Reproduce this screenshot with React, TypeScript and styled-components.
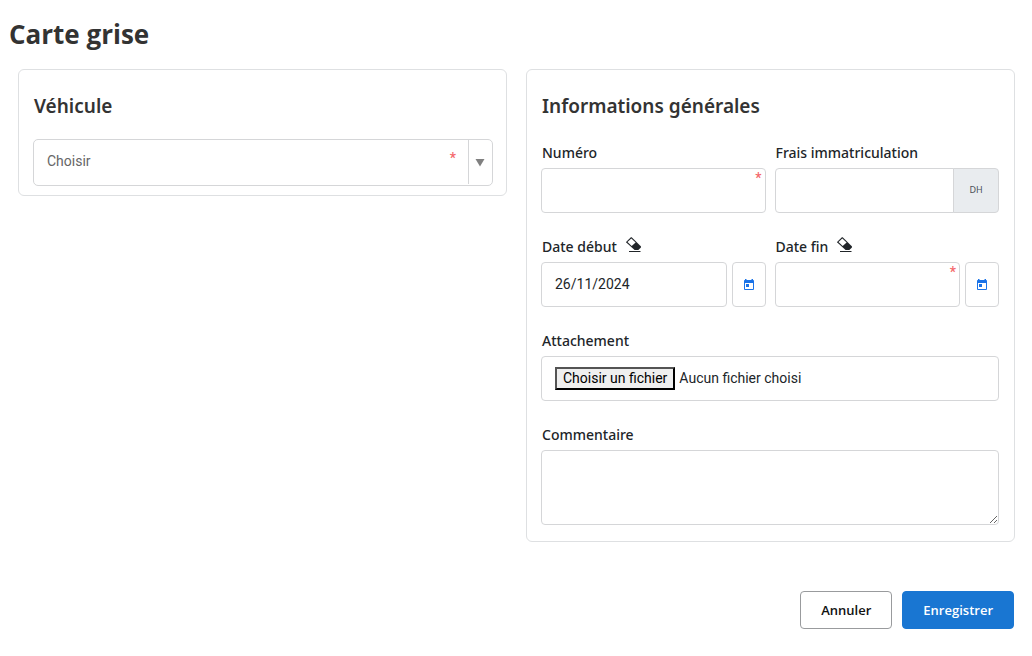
import React from "react";
import styled, { createGlobalStyle } from "styled-components";

const GlobalStyle = createGlobalStyle`
  *, *::before, *::after { box-sizing: border-box; }
  body {
    margin: 0;
    background: #fff;
    color: #212529;
    font-family: "Noto Sans", "Open Sans", sans-serif;
    font-size: 14px;
  }
`;

const Page = styled.main`
  padding: 14px 17px 27px 18px;
`;

const PageTitle = styled.h1`
  margin: 0 0 15px -9px;
  font-family: "Open Sans", sans-serif;
  font-size: 26px;
  font-weight: 700;
  line-height: 40px;
  color: #333;
`;

const Columns = styled.div`
  display: grid;
  grid-template-columns: 1fr 1fr;
  gap: 19px;
  align-items: start;
`;

const Card = styled.section<{ $compact?: boolean }>`
  min-width: 0;
  padding: ${(p) => (p.$compact ? "20px 13px 9px 14px" : "20px 15px 16px 14px")};
  border: 1px solid #dee0e2;
  border-radius: 6px;
`;

const CardTitle = styled.h2`
  margin: 0 0 17px 1px;
  font-family: "Noto Sans", sans-serif;
  font-size: 19px;
  font-weight: 600;
  line-height: 32px;
  color: #333;
`;

const Grid = styled.div`
  display: grid;
  grid-template-columns: 1fr 1fr;
  gap: 24px 9px;
  margin-top: 21px;
`;

const Field = styled.div<{ $wide?: boolean }>`
  min-width: 0;
  grid-column: ${(p) => (p.$wide ? "1 / -1" : "auto")};
`;

const LabelRow = styled.div`
  display: flex;
  align-items: flex-start;
  gap: 9px;
  height: 20px;
  margin-bottom: 5px;
  padding-left: 1px;
`;

const Label = styled.label`
  font-size: 14px;
  font-weight: 500;
  line-height: 20px;
`;

const ControlRow = styled.div`
  display: flex;
  gap: 5px;
`;

const Control = styled.div`
  position: relative;
  display: flex;
  flex: 1;
  min-width: 0;
`;

const TextInput = styled.input<{ $joined?: boolean }>`
  flex: 1;
  min-width: 0;
  width: 100%;
  height: 45px;
  padding: 0 13px 1px;
  border: 1px solid #d5d6d8;
  border-radius: ${(p) => (p.$joined ? "4px 0 0 4px" : "4px")};
  background: #fff;
  color: #212529;
  font-family: Roboto, sans-serif;
  font-size: 14px;
`;

const Unit = styled.span`
  display: flex;
  align-items: center;
  justify-content: center;
  width: 46px;
  margin-left: -1px;
  padding-bottom: 2px;
  border: 1px solid #d5d6d8;
  border-radius: 0 4px 4px 0;
  background: #e9ecef;
  color: #495057;
  font-size: 9px;
`;

const Required = styled.span<{ $inset?: boolean }>`
  position: absolute;
  top: ${(p) => (p.$inset ? 9 : 0)}px;
  right: ${(p) => (p.$inset ? 37 : 4)}px;
  color: #f4676b;
  font-family: Roboto, sans-serif;
  font-size: 14px;
  font-weight: 500;
  line-height: 20px;
  pointer-events: none;
`;

const Select = styled.select`
  appearance: none;
  width: 100%;
  height: 47px;
  padding: 0 60px 3px 13px;
  border: 1px solid #d5d6d8;
  border-radius: 5px;
  background: #fff;
  color: #666;
  font-family: Roboto, sans-serif;
  font-size: 14px;
`;

const SelectArrow = styled.span`
  position: absolute;
  top: 1px;
  bottom: 2px;
  right: 1px;
  display: flex;
  align-items: center;
  justify-content: center;
  width: 24px;
  padding-right: 2px;
  border-left: 1px solid #d5d6d8;
  pointer-events: none;
`;

const IconButton = styled.button`
  display: flex;
  padding: 0;
  border: 0;
  background: none;
  color: #212529;
  cursor: pointer;
`;

const CalendarButton = styled.button`
  display: flex;
  align-items: center;
  justify-content: center;
  width: 34px;
  height: 45px;
  padding: 0;
  border: 1px solid #d5d6d8;
  border-radius: 4px;
  background: #fff;
  color: #1a73e8;
  cursor: pointer;
`;

const FileBox = styled.div`
  position: relative;
  display: flex;
  align-items: center;
  gap: 4px;
  height: 45px;
  padding: 0 13px 1px;
  border: 1px solid #d5d6d8;
  border-radius: 4px;
  font-family: Roboto, sans-serif;
  font-size: 14px;
`;

const FileInput = styled.input`
  position: absolute;
  inset: 0;
  width: 100%;
  height: 100%;
  opacity: 0;
  cursor: pointer;
`;

const FileTrigger = styled.span`
  padding: 1px 6px;
  border: 2px outset #000;
  background: #efefef;
  color: #000;
  line-height: 17px;
`;

const TextArea = styled.textarea`
  display: block;
  width: 100%;
  height: 75px;
  padding: 10px 13px;
  border: 1px solid #d5d6d8;
  border-radius: 4px;
  background: #fff;
  font-family: Roboto, sans-serif;
  font-size: 14px;
  resize: vertical;
`;

const Actions = styled.footer`
  display: flex;
  justify-content: flex-end;
  gap: 10px;
  margin-top: 49px;
  padding-right: 1px;
`;

const Button = styled.button<{ $primary?: boolean }>`
  height: 38px;
  padding: 0 20px;
  border: 1px solid ${(p) => (p.$primary ? "#1976d2" : "#999b9d")};
  border-radius: 4px;
  background: ${(p) => (p.$primary ? "#1976d2" : "#fff")};
  color: ${(p) => (p.$primary ? "#fff" : "#111")};
  font-family: "Open Sans", sans-serif;
  font-size: 13px;
  font-weight: 600;
  cursor: pointer;
`;

const Eraser = () => (
  <svg width="16" height="16" viewBox="0 0 16 16" aria-hidden="true">
    <path
      d="M.3 4.800 4.900 .3Q5.300 0 5.700 .3L14.800 9.200Q15.400 10 14.700 10.700L12.300 13H8.600L.3 5.400Q0 5.100 .3 4.800Z"
      fill="currentColor"
    />
    <path d="M1.500 5.100 5.300 1.400 9.600 5.600 5.700 9Z" fill="#fff" />
    <path d="M3 14.500H14.500" stroke="currentColor" />
  </svg>
);

const Calendar = () => (
  <svg width="12" height="12" viewBox="0 0 12 12" aria-hidden="true" fill="currentColor">
    <path
      fillRule="evenodd"
      d="M2 0h1.500v1h5V0H10v1h.2a1 1 0 0 1 .8 1v8a1 1 0 0 1-1 1H2a1 1 0 0 1-1-1V2a1 1 0 0 1 .8-1H2ZM2 4V10h8V4Z"
    />
    <path d="M3 5h3v3H3Z" />
  </svg>
);

type DateFieldProps = { id: string; label: string; value?: string; required?: boolean };

const DateField = ({ id, label, value, required }: DateFieldProps) => (
  <Field>
    <LabelRow>
      <Label htmlFor={id}>{label}</Label>
      <IconButton type="button" aria-label={`Effacer ${label}`}>
        <Eraser />
      </IconButton>
    </LabelRow>
    <ControlRow>
      <Control>
        <TextInput id={id} defaultValue={value} required={required} />
        {required && <Required>*</Required>}
      </Control>
      <CalendarButton type="button" aria-label={`Calendrier ${label}`}>
        <Calendar />
      </CalendarButton>
    </ControlRow>
  </Field>
);

export default function App() {
  return (
    <>
      <GlobalStyle />
      <Page>
        <PageTitle>Carte grise</PageTitle>
        <form>
          <Columns>
            <Card $compact>
              <CardTitle id="vehicule-title">Véhicule</CardTitle>
              <Control>
                <Select aria-labelledby="vehicule-title" required>
                  <option value="">Choisir</option>
                </Select>
                <Required $inset>*</Required>
                <SelectArrow>
                  <svg width="10" height="9" viewBox="0 0 10 9" aria-hidden="true">
                    <path d="M.5 1h9L5 8.500Z" fill="#808080" />
                  </svg>
                </SelectArrow>
              </Control>
            </Card>
            <Card>
              <CardTitle>Informations générales</CardTitle>
              <Grid>
                <Field>
                  <LabelRow>
                    <Label htmlFor="numero">Numéro</Label>
                  </LabelRow>
                  <Control>
                    <TextInput id="numero" required />
                    <Required>*</Required>
                  </Control>
                </Field>
                <Field>
                  <LabelRow>
                    <Label htmlFor="frais">Frais immatriculation</Label>
                  </LabelRow>
                  <Control>
                    <TextInput id="frais" $joined />
                    <Unit>DH</Unit>
                  </Control>
                </Field>
                <DateField id="date-debut" label="Date début" value="26/11/2024" />
                <DateField id="date-fin" label="Date fin" required />
                <Field $wide>
                  <LabelRow>
                    <Label htmlFor="attachement">Attachement</Label>
                  </LabelRow>
                  <FileBox>
                    <FileTrigger>Choisir un fichier</FileTrigger>
                    <span>Aucun fichier choisi</span>
                    <FileInput id="attachement" type="file" />
                  </FileBox>
                </Field>
                <Field $wide>
                  <LabelRow>
                    <Label htmlFor="commentaire">Commentaire</Label>
                  </LabelRow>
                  <TextArea id="commentaire" />
                </Field>
              </Grid>
            </Card>
          </Columns>
          <Actions>
            <Button type="button">Annuler</Button>
            <Button type="submit" $primary>
              Enregistrer
            </Button>
          </Actions>
        </form>
      </Page>
    </>
  );
}
